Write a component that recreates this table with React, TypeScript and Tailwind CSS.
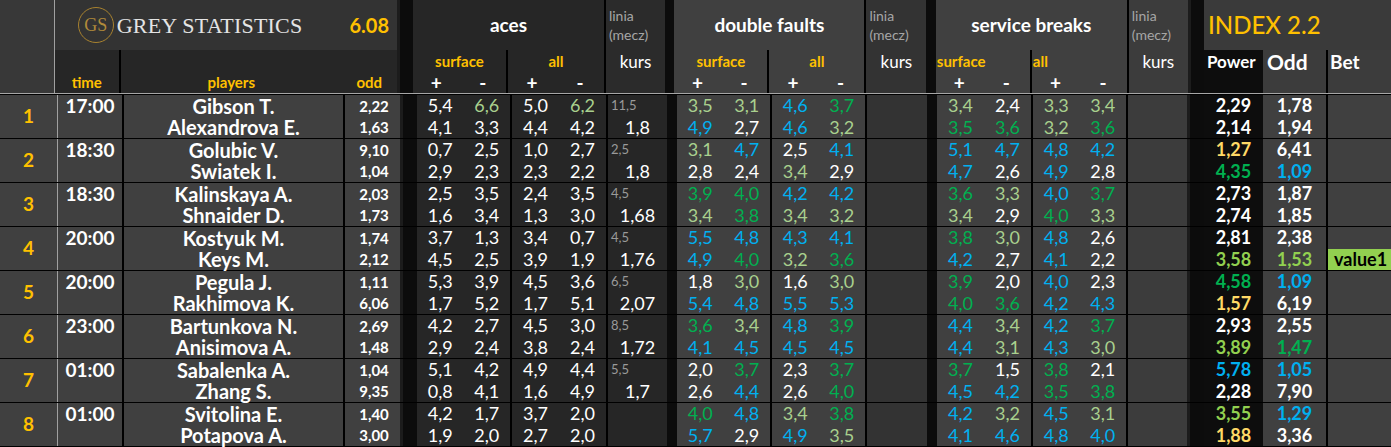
import React from 'react';

type C = 'w' | 'l' | 'g' | 'b' | 'y' | 'k';

const tone: Record<C, string> = {
  w: 'text-white',
  l: 'text-[#a9d08e]',
  g: 'text-[#00b050]',
  b: 'text-[#00b0f0]',
  y: 'text-[#ffd966]',
  k: 'text-[#92d050]',
};

type Match = {
  n: number;
  t: string;
  p: [string, string];
  o: [string, string];
  ac: string;
  li: [string, string];
  df: string;
  sb: string;
  ix: string;
  bet?: string;
};

const matches: Match[] = [
  {
    n: 1, t: '17:00', p: ['Gibson T.', 'Alexandrova E.'], o: ['2,22', '1,63'],
    ac: '5,4w 6,6l 5,0w 6,2l|4,1w 3,3w 4,4w 4,2w', li: ['11,5', '1,8'],
    df: '3,5l 3,1l 4,6b 3,7g|4,9b 2,7w 4,6b 3,2l',
    sb: '3,4l 2,4w 3,3l 3,4l|3,5g 3,6g 3,2l 3,6g',
    ix: '2,29w 1,78w|2,14w 1,94w',
  },
  {
    n: 2, t: '18:30', p: ['Golubic V.', 'Swiatek I.'], o: ['9,10', '1,04'],
    ac: '0,7w 2,5w 1,0w 2,7w|2,9w 2,3w 2,3w 2,2w', li: ['2,5', '1,8'],
    df: '3,1l 4,7b 2,5w 4,1b|2,8w 2,4w 3,4l 2,9w',
    sb: '5,1b 4,7b 4,8b 4,2b|4,7b 2,6w 4,9b 2,8w',
    ix: '1,27y 6,41w|4,35g 1,09b',
  },
  {
    n: 3, t: '18:30', p: ['Kalinskaya A.', 'Shnaider D.'], o: ['2,03', '1,73'],
    ac: '2,5w 3,5w 2,4w 3,5w|1,6w 3,4w 1,3w 3,0w', li: ['4,5', '1,68'],
    df: '3,9g 4,0g 4,2b 4,2b|3,4l 3,8g 3,4l 3,2l',
    sb: '3,6g 3,3l 4,0b 3,7g|3,4l 2,9w 4,0g 3,3l',
    ix: '2,73w 1,87w|2,74w 1,85w',
  },
  {
    n: 4, t: '20:00', p: ['Kostyuk M.', 'Keys M.'], o: ['1,74', '2,12'],
    ac: '3,7w 1,3w 3,4w 0,7w|4,5w 2,5w 3,9w 1,9w', li: ['4,5', '1,76'],
    df: '5,5b 4,8b 4,3b 4,1b|4,9b 4,0g 3,2l 3,6g',
    sb: '3,8g 3,0l 4,8b 2,6w|4,2b 2,7w 4,1b 2,2w',
    ix: '2,81w 2,38w|3,58k 1,53k', bet: 'value1',
  },
  {
    n: 5, t: '20:00', p: ['Pegula J.', 'Rakhimova K.'], o: ['1,11', '6,06'],
    ac: '5,3w 3,9w 4,5w 3,6w|1,7w 5,2w 1,7w 5,1w', li: ['6,5', '2,07'],
    df: '1,8w 3,0l 1,6w 3,0l|5,4b 4,8b 5,5b 5,3b',
    sb: '3,9g 2,0w 4,0b 2,3w|4,0g 3,6g 4,2b 4,3b',
    ix: '4,58g 1,09b|1,57y 6,19w',
  },
  {
    n: 6, t: '23:00', p: ['Bartunkova N.', 'Anisimova A.'], o: ['2,69', '1,48'],
    ac: '4,2w 2,7w 4,5w 3,0w|2,9w 2,4w 3,8w 2,4w', li: ['8,5', '1,72'],
    df: '3,6g 3,4l 4,8b 3,9g|4,1b 4,5b 4,5b 4,5b',
    sb: '4,4b 3,4l 4,2b 3,7g|4,4b 3,1l 4,3b 3,0l',
    ix: '2,93w 2,55w|3,89k 1,47g',
  },
  {
    n: 7, t: '01:00', p: ['Sabalenka A.', 'Zhang S.'], o: ['1,04', '9,35'],
    ac: '5,1w 4,2w 4,9w 4,4w|0,8w 4,1w 1,6w 4,9w', li: ['5,5', '1,7'],
    df: '2,0w 3,7g 2,3w 3,7g|2,6w 4,4b 2,6w 4,0g',
    sb: '3,7g 1,5w 3,8g 2,1w|4,5b 4,2b 3,5g 3,8g',
    ix: '5,78b 1,05b|2,28w 7,90w',
  },
  {
    n: 8, t: '01:00', p: ['Svitolina E.', 'Potapova A.'], o: ['1,40', '3,00'],
    ac: '4,2w 1,7w 3,7w 2,0w|1,9w 2,0w 2,7w 2,0w', li: ['', ''],
    df: '4,0g 4,8b 3,4l 3,8g|5,7b 2,9w 4,9b 3,5l',
    sb: '4,2b 3,2l 4,5b 3,1l|4,1b 4,6b 4,8b 4,0b',
    ix: '3,55k 1,29b|1,88y 3,36w',
  },
];

function parse(s: string) {
  return s.split('|').map((r) => r.split(' ').map((v) => ({ v: v.slice(0, -1), c: v.slice(-1) as C })));
}

// four stat columns: surface +/- and all +/-
function Quad({ s, bg, widths }: { s: string; bg: string; widths: [string, string] }) {
  const rows = parse(s);
  return (
    <div className={`flex ${bg}`}>
      {[0, 1].map((p) => (
        <div key={p} className={`flex border-r-2 border-black ${widths[p]}`}>
          {[0, 1].map((k) => {
            const i = p * 2 + k;
            return (
              <div key={k} className="flex flex-1 flex-col">
                {rows.map((r, j) => (
                  <div key={j} className={`flex h-[21.5px] items-center justify-center text-[18px] ${tone[r[i].c]}`}>
                    {r[i].v}
                  </div>
                ))}
              </div>
            );
          })}
        </div>
      ))}
    </div>
  );
}

function Linia({ li, bg, w }: { li: [string, string]; bg: string; w: string }) {
  return (
    <div className={`flex flex-col ${bg} ${w}`}>
      <div className="flex h-[21.5px] items-center pl-[3px] text-[13px] text-[#9a9a9a]">{li[0]}</div>
      <div className="flex h-[21.5px] items-center justify-center text-[18px] text-white">{li[1]}</div>
    </div>
  );
}

function Gap() {
  return <div className="h-full w-[17px] border-l-[3px] border-[#1c1c1c] bg-[#0c0c0c]" />;
}

function SmallGap() {
  return <div className="h-full w-[10px] bg-[#0c0c0c]" />;
}

function GroupHead({
  title, bg, liniaBg, widths, liniaW, left,
}: {
  title: string; bg: string; liniaBg: string; widths: [string, string]; liniaW: string; left?: boolean;
}) {
  const label = left ? 'justify-start pl-[1px]' : 'justify-center';
  return (
    <div className="flex h-full">
      <div className={`flex flex-col border-r-2 border-black ${bg}`}>
        <div className="flex h-[50px] items-center justify-center text-[19px] font-bold text-white">{title}</div>
        <div className="flex h-[43px]">
          {['surface', 'all'].map((t, p) => (
            <div key={t} className={`flex flex-col ${widths[p]} ${p === 0 ? 'border-r-2 border-black' : ''}`}>
              <div className={`flex h-[23px] items-center text-[15px] font-bold text-[#ffc000] ${label}`}>{t}</div>
              <div className="flex h-[20px] text-[19px] font-bold text-white">
                <span className="flex flex-1 items-center justify-center">+</span>
                <span className="flex flex-1 items-center justify-center">-</span>
              </div>
            </div>
          ))}
        </div>
      </div>
      <div className={`flex flex-col ${liniaBg} ${liniaW}`}>
        <div className="flex h-[50px] flex-col justify-center pl-[3px] text-[14px] leading-[19px] text-[#a6a6a6]">
          <span>linia</span>
          <span>(mecz)</span>
        </div>
        <div className="flex h-[23px] items-center justify-center text-[17px] text-white">kurs</div>
      </div>
    </div>
  );
}

function Header() {
  return (
    <div className="flex h-[93px]">
      <div className="w-[58px] border-r border-[#a0a0a0] bg-[#383838]" />
      <div className="flex w-[342px] flex-col">
        <div className="flex h-[50px] items-center bg-[#333333]">
          <div className="flex w-[287px] items-center pl-[23px]">
            <div className="flex h-[36px] w-[36px] items-center justify-center rounded-full border-[1.5px] border-[#a8822f] font-['Liberation_Serif',serif] text-[18px] text-[#b08a3a]">
              GS
            </div>
            <span className="ml-[3px] font-['Liberation_Serif',serif] text-[22px] tracking-[0.2px] text-[#e4e4e4]">
              GREY STATISTICS
            </span>
          </div>
          <div className="flex w-[55px] justify-center text-[20px] font-bold text-[#ffc000]">6.08</div>
        </div>
        <div className="flex h-[43px] items-end bg-[#262626] text-[15px] font-bold text-[#ffc000]">
          <div className="flex h-full w-[66px] items-end justify-center border-r-2 border-black">time</div>
          <div className="flex w-[221px] justify-center">players</div>
          <div className="flex w-[55px] justify-center">odd</div>
        </div>
      </div>
      <Gap />
      <GroupHead title="aces" bg="bg-[#262626]" liniaBg="bg-[#2b2b2b]" widths={['w-[95px]', 'w-[96px]']} liniaW="w-[59px]" />
      <SmallGap />
      <GroupHead title="double faults" bg="bg-[#404040]" liniaBg="bg-[#333333]" widths={['w-[95px]', 'w-[95px]']} liniaW="w-[60px]" />
      <SmallGap />
      <GroupHead title="service breaks" bg="bg-[#404040]" liniaBg="bg-[#3c3c3c]" widths={['w-[96px]', 'w-[95px]']} liniaW="w-[59px]" left />
      <Gap />
      <div className="flex w-[187px] flex-col">
        <div className="flex h-[50px] items-center bg-[#3a3a3a] pl-[4px] text-[24px] font-medium text-[#ffc000]">INDEX 2.2</div>
        <div className="flex h-[43px] font-bold text-white">
          <div className="w-[59px] bg-[#0d0d0d] pl-[3px] text-[17px] leading-[24px]">Power</div>
          <div className="w-[65px] border-r-2 border-black bg-[#3c3c3c] pl-[4px] text-[21px] leading-[24px]">Odd</div>
          <div className="w-[63px] bg-[#3c3c3c] pl-[2px] text-[19px] leading-[24px]">Bet</div>
        </div>
      </div>
    </div>
  );
}

function Row({ m }: { m: Match }) {
  const ix = parse(m.ix);
  return (
    <div className="flex h-[44px] border-b border-black">
      <div className="flex w-[58px] items-center justify-center border-r border-[#a0a0a0] bg-[#404040] text-[19px] font-bold text-[#ffc000]">
        {m.n}
      </div>
      <div className="w-[66px] border-r-2 border-black bg-[#404040]">
        <div className="flex h-[21.5px] items-center justify-center text-[19px] font-bold text-white">{m.t}</div>
      </div>
      <div className="flex w-[221px] flex-col border-r-2 border-black bg-[#404040] text-[20px] font-bold text-white">
        {m.p.map((n) => (
          <div key={n} className="flex h-[21.5px] items-center justify-center leading-none">{n}</div>
        ))}
      </div>
      <div className="flex w-[55px] flex-col bg-[#404040] text-[15px] font-bold text-white">
        {m.o.map((o, i) => (
          <div key={i} className="flex h-[21.5px] items-center justify-center pl-[3px]">{o}</div>
        ))}
      </div>
      <Gap />
      <Quad s={m.ac} bg="bg-[#262626]" widths={['w-[95px]', 'w-[96px]']} />
      <Linia li={m.li} bg="bg-[#262626]" w="w-[59px]" />
      <SmallGap />
      <Quad s={m.df} bg="bg-[#404040]" widths={['w-[95px]', 'w-[95px]']} />
      <Linia li={['', '']} bg="bg-[#333333]" w="w-[60px]" />
      <SmallGap />
      <Quad s={m.sb} bg="bg-[#404040]" widths={['w-[96px]', 'w-[95px]']} />
      <Linia li={['', '']} bg="bg-[#3c3c3c]" w="w-[59px]" />
      <Gap />
      <div className="flex w-[59px] flex-col bg-[#0d0d0d] text-[18px] font-bold">
        {ix.map((r, j) => (
          <div key={j} className={`flex h-[21.5px] items-center justify-center ${tone[r[0].c]}`}>{r[0].v}</div>
        ))}
      </div>
      <div className="flex w-[65px] flex-col border-r-2 border-black bg-[#404040] text-[18px] font-bold">
        {ix.map((r, j) => (
          <div key={j} className={`flex h-[21.5px] items-center justify-center ${tone[r[1].c]}`}>{r[1].v}</div>
        ))}
      </div>
      <div className="flex w-[63px] flex-col bg-[#404040]">
        <div className="h-[21.5px]" />
        {m.bet ? (
          <div className="flex h-[21.5px] items-center bg-[#92d050] pl-[6px] text-[18px] font-bold text-black">{m.bet}</div>
        ) : null}
      </div>
    </div>
  );
}

export default function App() {
  return (
    <div className="h-[447px] w-[1391px] overflow-hidden bg-black font-['Lato','Open_Sans',sans-serif]">
      <Header />
      <div className="h-px bg-[#a6a6a6]" />
      <div className="h-px bg-black" />
      {matches.map((m) => (
        <Row key={m.n} m={m} />
      ))}
    </div>
  );
}
